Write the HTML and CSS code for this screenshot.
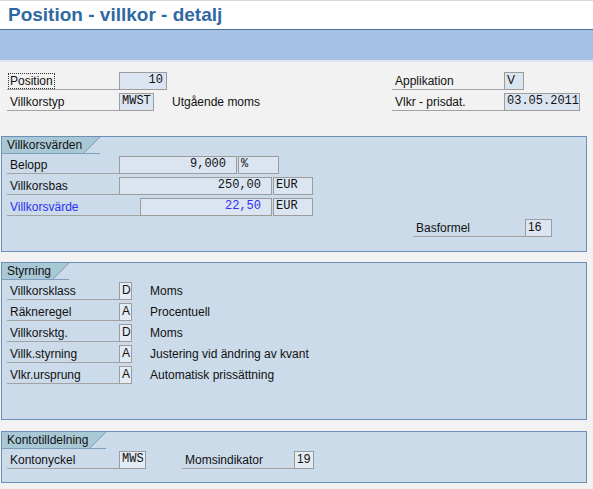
FILE: index.html
```html
<!DOCTYPE html>
<html lang="sv">
<head>
<meta charset="utf-8">
<title>Position - villkor - detalj</title>
<link rel="stylesheet" href="styles.css">
</head>
<body>
<header class="titlebar"><h1 class="title">Position - villkor - detalj</h1></header>
<div class="toolbar"></div>
<main class="content">
  <section class="head-fields">
    <div class="col col-left">
      <div class="row">
        <span class="label label-focus"><span class="focus">Position</span></span>
        <span class="field mono right w48">10</span>
      </div>
      <div class="row">
        <span class="label">Villkorstyp</span>
        <span class="field mono w35">MWST</span>
        <span class="desc">Utgående moms</span>
      </div>
    </div>
    <div class="col">
      <div class="row">
        <span class="label">Applikation</span>
        <span class="field sans w20">V</span>
      </div>
      <div class="row">
        <span class="label">Vlkr - prisdat.</span>
        <span class="field mono w76">03.05.2011</span>
      </div>
    </div>
  </section>

  <section class="group group-values">
    <div class="tab">Villkorsvärden</div>
    <div class="rows">
      <div class="row">
        <span class="label">Belopp</span>
        <span class="field mono right signed w118">9,000</span>
        <span class="field mono unit w41">%</span>
      </div>
      <div class="row">
        <span class="label">Villkorsbas</span>
        <span class="field mono right signed w153">250,00</span>
        <span class="field mono unit w40">EUR</span>
      </div>
      <div class="row">
        <span class="label label-wide blue">Villkorsvärde</span>
        <span class="field mono right signed blue w132">22,50</span>
        <span class="field mono unit w40">EUR</span>
      </div>
      <div class="row row-basformel">
        <span class="label">Basformel</span>
        <span class="field sans w27">16</span>
      </div>
    </div>
  </section>

  <section class="group group-control">
    <div class="tab">Styrning</div>
    <div class="rows">
      <div class="row">
        <span class="label">Villkorsklass</span>
        <span class="field sans light w13">D</span>
        <span class="desc">Moms</span>
      </div>
      <div class="row">
        <span class="label">Räkneregel</span>
        <span class="field sans light w13">A</span>
        <span class="desc">Procentuell</span>
      </div>
      <div class="row">
        <span class="label">Villkorsktg.</span>
        <span class="field sans light w13">D</span>
        <span class="desc">Moms</span>
      </div>
      <div class="row">
        <span class="label">Villk.styrning</span>
        <span class="field sans light w13">A</span>
        <span class="desc">Justering vid ändring av kvant</span>
      </div>
      <div class="row">
        <span class="label">Vlkr.ursprung</span>
        <span class="field sans light w13">A</span>
        <span class="desc">Automatisk prissättning</span>
      </div>
    </div>
  </section>

  <section class="group group-account">
    <div class="tab">Kontotilldelning</div>
    <div class="rows">
      <div class="row">
        <span class="label">Kontonyckel</span>
        <span class="field mono light w27">MWS</span>
        <span class="label label-gap">Momsindikator</span>
        <span class="field sans light w20">19</span>
      </div>
    </div>
  </section>
</main>
</body>
</html>
```

FILE: styles.css
```css
* { box-sizing: border-box; }

html, body {
  margin: 0;
  padding: 0;
}

body {
  background: #f2f2f2;
  font-family: "Liberation Sans", Arial, sans-serif;
  font-size: 12px;
  color: #111;
}

.titlebar {
  height: 30px;
  background: #ffffff;
  border-top: 1px solid #d8d8d8;
  border-bottom: 1px solid #4a6f99;
}

.title {
  margin: 0;
  padding-left: 8px;
  font-size: 19px;
  line-height: 28px;
  font-weight: bold;
  color: #2f69a2;
}

.toolbar {
  height: 32px;
  background: #a6c1e3;
  border-bottom: 2px solid #dfe5ec;
}

.content {
  padding-top: 10px;
}

.head-fields {
  display: flex;
  padding-left: 7px;
}

.col {
  display: flex;
  flex-direction: column;
  gap: 3px;
}

.col-left {
  width: 385px;
}

.row {
  display: flex;
  align-items: flex-start;
  height: 18px;
}

.label {
  width: 112px;
  height: 18px;
  padding: 2px 0 0 3px;
  line-height: 15px;
  border-bottom: 1px solid #a3a3a3;
  white-space: nowrap;
  flex: none;
}

.label-focus {
  padding-left: 1px;
  padding-top: 1px;
}

.focus {
  display: inline-block;
  height: 16px;
  padding: 0 1px;
  line-height: 15px;
  border: 1px dotted #333;
}

.label-wide {
  width: 133px;
}

.label-gap {
  margin-left: 36px;
}

.blue {
  color: #2f2ff2;
}

.field {
  height: 18px;
  border: 1px solid #9c9c9c;
  background: #dbe5f2;
  line-height: 15px;
  padding: 0 2px;
  white-space: nowrap;
  flex: none;
}

.field.light {
  background: #e3ebf5;
}

.mono {
  font-family: "Liberation Mono", "Courier New", monospace;
  font-size: 12px;
  padding-left: 2px;
}

.sans {
  font-family: "Liberation Sans", Arial, sans-serif;
  padding-left: 2px;
}

.right {
  text-align: right;
  padding-right: 3px;
}

.right.signed {
  padding-right: 10px;
}

.unit {
  margin-left: 1px;
}

.desc {
  margin-left: 18px;
  padding-top: 1px;
  line-height: 17px;
  white-space: nowrap;
}

.w13 { width: 13px; padding-left: 2px; padding-right: 0; }
.w20 { width: 20px; }
.w27 { width: 27px; }
.w35 { width: 35px; }
.w40 { width: 40px; }
.w41 { width: 41px; }
.w48 { width: 48px; }
.w76 { width: 76px; }
.w118 { width: 118px; }
.w132 { width: 132px; }
.w153 { width: 153px; }

.group {
  margin-left: 1px;
  width: 586px;
  background: #cbdbea;
  border: 1px solid #6b8fb6;
}

.group-values {
  margin-top: 25px;
  height: 116px;
}

.group-control {
  margin-top: 10px;
  height: 158px;
}

.group-account {
  margin-top: 11px;
  height: 52px;
}

.tab {
  display: inline-block;
  height: 17px;
  padding: 0 18px 0 5px;
  line-height: 16px;
  white-space: nowrap;
  border-bottom: 1px solid #7d9ebd;
  background:
    linear-gradient(to top left, transparent calc(50% - 0.6px), #7d9ebd 50%, #a9c8d6 calc(50% + 0.6px)) right top / 16px 16px no-repeat,
    linear-gradient(#a9c8d6, #a9c8d6) left top / calc(100% - 16px) 16px no-repeat;
}

.rows {
  display: flex;
  flex-direction: column;
  gap: 3px;
  padding: 2px 0 0 5px;
}

.row-basformel {
  margin-left: 406px;
}
```
